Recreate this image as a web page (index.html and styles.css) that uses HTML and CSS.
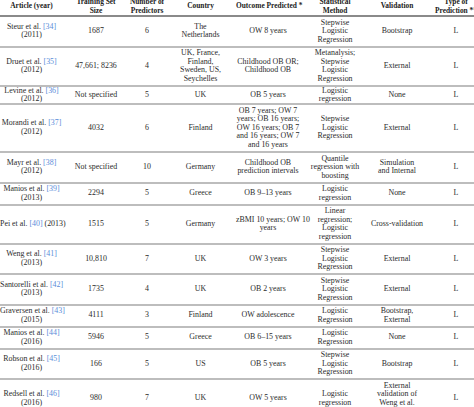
FILE: index.html
```html
<!DOCTYPE html>
<html lang="en">
<head>
<meta charset="utf-8">
<title>Prediction models table</title>
<link rel="stylesheet" href="styles.css">
</head>
<body>
<table class="models">
  <colgroup>
    <col class="c-article"><col class="c-size"><col class="c-num"><col class="c-country">
    <col class="c-outcome"><col class="c-method"><col class="c-valid"><col class="c-type">
  </colgroup>
  <thead>
    <tr>
      <th>Article (year)</th>
      <th>Training Set<br>Size</th>
      <th>Number of<br>Predictors</th>
      <th>Country</th>
      <th>Outcome Predicted *</th>
      <th>Statistical<br>Method</th>
      <th>Validation</th>
      <th>Type of<br>Prediction **</th>
    </tr>
  </thead>
  <tbody>
    <tr>
      <td>Steur et al. <span class="ref">[34]</span><br>(2011)</td>
      <td>1687</td><td>6</td><td>The<br>Netherlands</td><td>OW 8 years</td>
      <td>Stepwise<br>Logistic<br>Regression</td><td>Bootstrap</td><td>L</td>
    </tr>
    <tr>
      <td>Druet et al. <span class="ref">[35]</span><br>(2012)</td>
      <td>47,661; 8236</td><td>4</td><td>UK, France,<br>Finland,<br>Sweden, US,<br>Seychelles</td>
      <td>Childhood OB OR;<br>Childhood OB</td>
      <td>Metanalysis;<br>Stepwise<br>Logistic<br>Regression</td><td>External</td><td>L</td>
    </tr>
    <tr class="tight">
      <td>Levine et al. <span class="ref">[36]</span><br>(2012)</td>
      <td>Not specified</td><td>5</td><td>UK</td><td>OB 5 years</td>
      <td>Logistic<br>regression</td><td>None</td><td>L</td>
    </tr>
    <tr class="loose">
      <td>Morandi et al. <span class="ref">[37]</span><br>(2012)</td>
      <td>4032</td><td>6</td><td>Finland</td>
      <td>OB 7 years; OW 7<br>years; OB 16 years;<br>OW 16 years; OB 7<br>and 16 years; OW 7<br>and 16 years</td>
      <td>Stepwise<br>Logistic<br>Regression</td><td>External</td><td>L</td>
    </tr>
    <tr>
      <td>Mayr et al. <span class="ref">[38]</span><br>(2012)</td>
      <td>Not specified</td><td>10</td><td>Germany</td>
      <td>Childhood OB<br>prediction intervals</td>
      <td>Quantile<br>regression with<br>boosting</td><td>Simulation<br>and Internal</td><td>L</td>
    </tr>
    <tr>
      <td>Manios et al. <span class="ref">[39]</span><br>(2013)</td>
      <td>2294</td><td>5</td><td>Greece</td><td>OB 9–13 years</td>
      <td>Logistic<br>regression</td><td>None</td><td>L</td>
    </tr>
    <tr>
      <td>Pei et al. <span class="ref">[40]</span> (2013)</td>
      <td>1515</td><td>5</td><td>Germany</td><td>zBMI 10 years; OW 10<br>years</td>
      <td>Linear<br>regression;<br>Logistic<br>regression</td><td>Cross-validation</td><td>L</td>
    </tr>
    <tr>
      <td>Weng et al. <span class="ref">[41]</span><br>(2013)</td>
      <td>10,810</td><td>7</td><td>UK</td><td>OW 3 years</td>
      <td>Stepwise<br>Logistic<br>Regression</td><td>External</td><td>L</td>
    </tr>
    <tr>
      <td>Santorelli et al. <span class="ref">[42]</span><br>(2013)</td>
      <td>1735</td><td>4</td><td>UK</td><td>OB 2 years</td>
      <td>Stepwise<br>Logistic<br>Regression</td><td>External</td><td>L</td>
    </tr>
    <tr>
      <td>Graversen et al. <span class="ref">[43]</span><br>(2015)</td>
      <td>4111</td><td>3</td><td>Finland</td><td>OW adolescence</td>
      <td>Logistic<br>Regression</td><td>Bootstrap,<br>External</td><td>L</td>
    </tr>
    <tr>
      <td>Manios et al. <span class="ref">[44]</span><br>(2016)</td>
      <td>5946</td><td>5</td><td>Greece</td><td>OB 6–15 years</td>
      <td>Logistic<br>Regression</td><td>None</td><td>L</td>
    </tr>
    <tr>
      <td>Robson et al. <span class="ref">[45]</span><br>(2016)</td>
      <td>166</td><td>5</td><td>US</td><td>OB 5 years</td>
      <td>Stepwise<br>Logistic<br>Regression</td><td>Bootstrap</td><td>L</td>
    </tr>
    <tr>
      <td>Redsell et al. <span class="ref">[46]</span><br>(2016)</td>
      <td>980</td><td>7</td><td>UK</td><td>OW 5 years</td>
      <td>Logistic<br>regression</td>
      <td>External<br>validation of<br>Weng et al.<br><span class="ref">[41]</span></td><td>L</td>
    </tr>
  </tbody>
</table>
</body>
</html>
```

FILE: styles.css
```css
html, body {
  margin: 0;
  padding: 0;
  background: #ffffff;
  overflow: hidden;
}

.models {
  margin-top: -2px;
  border-collapse: collapse;
  table-layout: fixed;
  width: 488px;
  font-family: "Liberation Serif", "Times New Roman", serif;
  font-size: 7.9px;
  line-height: 8.5px;
  color: #2b2b2b;
}

.c-article { width: 63px; }
.c-size { width: 66px; }
.c-num { width: 36px; }
.c-country { width: 71px; }
.c-outcome { width: 64px; }
.c-method { width: 70px; }
.c-valid { width: 54px; }
.c-type { width: 64px; }

.models th,
.models td {
  padding: 1.5px 0;
  text-align: center;
  vertical-align: middle;
  white-space: nowrap;
  border-bottom: 2px solid #bdbdbd;
}

.models th {
  font-weight: bold;
  font-size: 7.4px;
  padding: 0;
  height: 17px;
  border-bottom: 2px solid #8a8a8a;
  color: #222;
}

.models tr.tight td {
  padding: 0;
  line-height: 8px;
}

.models tr.loose td {
  padding: 2px 0;
}

.ref {
  color: #5b8dd9;
}
```
